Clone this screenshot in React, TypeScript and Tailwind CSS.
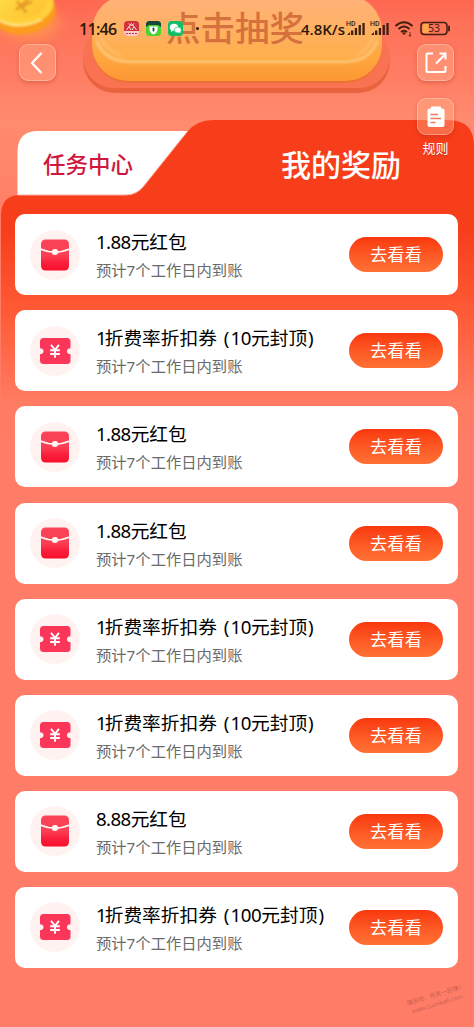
import type { ReactNode } from 'react';

type RewardKind = 'packet' | 'coupon';

interface Reward {
  kind: RewardKind;
  amount: string;
}

const rewards: Reward[] = [
  { kind: 'packet', amount: '1.88' },
  { kind: 'coupon', amount: '10' },
  { kind: 'packet', amount: '1.88' },
  { kind: 'packet', amount: '1.88' },
  { kind: 'coupon', amount: '10' },
  { kind: 'coupon', amount: '10' },
  { kind: 'packet', amount: '8.88' },
  { kind: 'coupon', amount: '100' },
];

function HeroArt() {
  return (
    <svg className="absolute inset-0" width="474" height="120" viewBox="0 0 474 120" aria-hidden="true">
      <defs>
        <linearGradient id="sky" x1="0" y1="0" x2="0" y2="1">
          <stop offset="0" stopColor="#ff6750" />
          <stop offset="0.2" stopColor="#fd7259" />
          <stop offset="0.65" stopColor="#ff7e64" />
          <stop offset="1" stopColor="#ff8b6e" />
        </linearGradient>
        <linearGradient id="face" x1="0" y1="0" x2="0" y2="1">
          <stop offset="0" stopColor="#ffb27c" />
          <stop offset="0.5" stopColor="#ffb163" />
          <stop offset="1" stopColor="#ffae47" />
        </linearGradient>
        <linearGradient id="side" x1="0" y1="0" x2="0" y2="1">
          <stop offset="0" stopColor="#ffb27c" />
          <stop offset="0.7" stopColor="#ffa840" />
          <stop offset="1" stopColor="#fc9833" />
        </linearGradient>
        <linearGradient id="coin" x1="0" y1="0" x2="1" y2="1">
          <stop offset="0" stopColor="#ffe04e" />
          <stop offset="1" stopColor="#ffc02c" />
        </linearGradient>
        <filter id="soft" x="-20%" y="-20%" width="140%" height="140%">
          <feGaussianBlur stdDeviation="0.9" />
        </filter>
        <filter id="glow" x="-50%" y="-50%" width="200%" height="200%">
          <feGaussianBlur stdDeviation="6" />
        </filter>
      </defs>
      <rect width="474" height="120" fill="url(#sky)" />

      {/* Button base */}
      <rect x="83" y="28" width="307" height="65" rx="32" fill="#e9633f" />
      <rect x="83" y="26" width="307" height="62" rx="31" fill="#f97353" />
      <rect x="92" y="-5" width="290" height="88" rx="36" fill="#ee6f38" />
      <rect x="92" y="-5" width="290" height="86" rx="36" fill="url(#side)" />
      <path d="M94 30Q98 -4 132 -4H342Q376 -4 380 30Q378 62 344 62H130Q96 62 94 30Z" fill="url(#face)" />
      <g fill="none" stroke="#ffcc83" strokeLinecap="round" filter="url(#soft)">
        <path d="M97 42Q105 61 128 62H346Q370 61 377 42" strokeWidth="2" />
        <path d="M99 32Q103 48 121 56M375 32Q371 48 355 56" strokeWidth="1.6" opacity="0.6" />
      </g>

      {/* Gold coin */}
      <ellipse cx="28" cy="22" rx="32" ry="18" fill="#ffa24a" opacity="0.6" filter="url(#glow)" />
      <g transform="rotate(-8 24 6)" filter="url(#soft)">
        <ellipse cx="23" cy="12" rx="32" ry="22" fill="#fb9c1c" />
        <ellipse cx="22" cy="5" rx="32" ry="21" fill="#ffd03a" />
        <ellipse cx="21" cy="1" rx="27" ry="18" fill="url(#coin)" />
        <path d="M18 1L25 12M30 -1L20 6M16 8L32 3" stroke="#e59a25" strokeWidth="2.6" strokeLinecap="round" />
        <path d="M-2 17Q14 29 40 22" fill="none" stroke="#ffe98a" strokeWidth="1.6" />
      </g>
    </svg>
  );
}

function Signal() {
  return (
    <svg width="20" height="17" viewBox="0 0 20 17" aria-hidden="true">
      <text x="0" y="6.5" fontSize="7" fontWeight="500" fill="#42200f" fontFamily="Roboto, sans-serif">
        HD
      </text>
      <path d="M1 16L4 13V16ZM5 11.5H7.3V16H5ZM8.8 9H11.1V16H8.8ZM12.6 6H14.9V16H12.6ZM16.4 4H18.7V16H16.4Z" fill="#42200f" />
    </svg>
  );
}

function StatusBar() {
  return (
    <div className="absolute inset-x-0 top-0 h-11 text-[#2b170b]">
      <span className="absolute left-[79px] top-[18px] font-['Open_Sans',sans-serif] text-[16px] font-semibold leading-[22px] tracking-[-0.7px]">
        11:46
      </span>
      <div className="absolute left-[124px] top-[21px] flex items-center gap-[7px]">
        <svg width="15" height="15" viewBox="0 0 15 15">
          <rect width="15" height="15" rx="3.5" fill="#d2333b" />
          <path
            d="M2.5 9L5 5.5L7 9M8 9L10 5.5L12.5 9M5 5.5L7.5 2.5L10 5.5M5 2.5L7.5 5L10 2.5"
            fill="none"
            stroke="#fbe3e0"
            strokeWidth="1"
          />
          <path d="M0 10H15V11.5Q15 15 11.5 15H3.5Q0 15 0 11.5Z" fill="#f7cdc9" />
          <path d="M2 12.5H13" stroke="#d2333b" strokeDasharray="2 1" />
        </svg>
        <svg width="15" height="15" viewBox="0 0 15 15">
          <rect width="15" height="15" rx="3.5" fill="#4bd335" />
          <path d="M0 6V3.5Q0 0 3.5 0H11.5Q15 0 15 3.5V6L12 4H3Z" fill="#15473b" />
          <path d="M3.5 5.5H11.5V8.5Q11 12 7.5 13.5Q4 12 3.5 8.5Z" fill="#fff" />
          <path d="M7.5 7.5V9.5" stroke="#15473b" strokeWidth="1.8" strokeLinecap="round" />
        </svg>
        <svg width="15" height="15" viewBox="0 0 15 15">
          <rect width="15" height="15" rx="3.5" fill="#13bd67" />
          <ellipse cx="6" cy="6.2" rx="4.2" ry="3.5" fill="#fff" />
          <ellipse cx="9.8" cy="9" rx="3.5" ry="2.9" fill="#fff" stroke="#13bd67" strokeWidth="0.6" />
          <path d="M3 8.5L3 11L5.5 9.5M11 11L12.3 12.4V10" fill="#fff" />
        </svg>
      </div>
      <span className="absolute left-[196px] top-[27px] size-[3px] rounded-full bg-[#2b170b]" />
      <span className="absolute left-[301px] top-[18px] whitespace-nowrap font-['Open_Sans',sans-serif] text-[15px] font-semibold leading-[22px]">
        4.8K/s
      </span>
      <div className="absolute left-[346px] top-[19px] flex gap-1">
        <Signal />
        <Signal />
      </div>
      <svg className="absolute left-[394px] top-[20px]" width="21" height="17" viewBox="0 0 21 17">
        <g fill="none" stroke="#42200f" strokeWidth="2">
          <path d="M1.5 6Q10 -1.5 18.5 6" />
          <path d="M4.5 9Q10 4 15.5 9" />
          <path d="M7 12Q10 9.5 13 12" />
        </g>
        <path d="M8 13Q10 11.5 12 13L10 15Z" fill="#42200f" />
        <path d="M16 12V16M15 15L16 16.5L17 15" stroke="#42200f" strokeWidth="0.8" fill="none" />
      </svg>
      <svg className="absolute left-[420px] top-[21px]" width="31" height="15" viewBox="0 0 31 15">
        <rect x="1" y="1.5" width="26" height="12" rx="3.2" fill="none" stroke="#42200f" strokeWidth="1.5" />
        <rect x="2.5" y="3" width="7" height="9" rx="1.5" fill="#ffa64e" />
        <path d="M29 5.5V9.5" stroke="#42200f" strokeWidth="1.8" strokeLinecap="round" />
        <text x="14" y="11.2" textAnchor="middle" fontSize="10.5" fill="#42200f" fontFamily="Noto Sans, sans-serif">
          53
        </text>
      </svg>
    </div>
  );
}

function GlassButton({ label, children }: { label: string; children: ReactNode }) {
  return (
    <button
      type="button"
      aria-label={label}
      className="flex size-[37px] items-center justify-center rounded-[9px] border border-white/30 bg-[#ffb18c]/40 shadow-[0_2px_4px_rgba(170,45,20,0.35)]"
    >
      {children}
    </button>
  );
}

function TabBackdrop() {
  return (
    <svg className="absolute left-0 top-0" width="474" height="907" viewBox="0 0 474 907" aria-hidden="true">
      <defs>
        <linearGradient id="panel" gradientUnits="userSpaceOnUse" x1="0" y1="0" x2="0" y2="907">
          <stop offset="0" stopColor="#f73d1a" />
          <stop offset="0.12" stopColor="#f73e1b" />
          <stop offset="0.215" stopColor="#ff5b37" />
          <stop offset="0.31" stopColor="#ff7b61" />
          <stop offset="0.36" stopColor="#ff7d66" />
          <stop offset="1" stopColor="#ff7d66" />
        </linearGradient>
        <linearGradient id="behind" x1="0" y1="0" x2="0" y2="1">
          <stop offset="0" stopColor="#ff8b6e" />
          <stop offset="1" stopColor="#ff7d66" />
        </linearGradient>
      </defs>
      <rect width="474" height="110" fill="url(#behind)" />
      <path d="M17.5 78V31Q18 11 38 11H200V78Z" fill="#fff" />
      <path
        d="M1 907V94Q2 75 20 75H126Q136 75 143 67L187 12Q197 0 213 0H448Q474 0 474 26V907Z"
        fill="url(#panel)"
      />
      <path d="M18 75H126Q136 75 143 67L187 12" fill="none" stroke="#ffab97" strokeWidth="1" />
    </svg>
  );
}

function RewardIcon({ kind }: { kind: RewardKind }) {
  if (kind === 'packet') {
    return (
      <svg width="50" height="50" viewBox="0 0 50 50" aria-hidden="true">
        <defs>
          <linearGradient id="packet" x1="0" y1="0" x2="0" y2="1">
            <stop offset="0" stopColor="#fb4459" />
            <stop offset="0.5" stopColor="#fb4055" />
            <stop offset="0.7" stopColor="#fb2440" />
            <stop offset="1" stopColor="#f60d2c" />
          </linearGradient>
        </defs>
        <circle cx="25" cy="25" r="25" fill="#fff2f0" />
        <rect x="11" y="9.5" width="28" height="31" rx="4.5" fill="url(#packet)" />
        <path d="M10.5 19.2Q18 22.3 25 22.3T39.5 19.2" fill="none" stroke="#fff2f0" strokeWidth="1.9" />
        <ellipse cx="25" cy="22" rx="3.2" ry="3" fill="#fff5f3" />
      </svg>
    );
  }

  return (
    <svg width="50" height="50" viewBox="0 0 50 50" aria-hidden="true">
      <circle cx="25" cy="25" r="25" fill="#fff2f0" />
      <path
        d="M13.5 12H37Q40.5 12 40.5 15.5V22.3Q37 22.5 37 25.3T40.5 28.3V34.5Q40.5 38 37 38H13.5Q10 38 10 34.5V28.3Q13.5 28 13.5 25.3T10 22.3V15.5Q10 12 13.5 12Z"
        fill="#fa3659"
      />
      <path
        d="M21 18.8L25 23.8L29 18.8M25 23.8V31.8M20.2 24.3H29.8M20.2 28H29.8"
        fill="none"
        stroke="#fff"
        strokeWidth="1.9"
      />
    </svg>
  );
}

function RewardTitle({ kind, amount }: Reward) {
  if (kind === 'packet') {
    return (
      <>
        <span className="tracking-[-0.6px]">{amount}</span>元红包
      </>
    );
  }

  return (
    <>
      <span className="-mr-[2px]">1</span>折费率折扣券
      <span className="ml-[7px] mr-[1px]">(</span>
      <span className="tracking-[-0.4px]">{amount}</span>元封顶
      <span className="ml-px">)</span>
    </>
  );
}

function RewardCard({ reward }: { reward: Reward }) {
  return (
    <li className="flex h-[81px] items-center rounded-[10px] bg-white px-[15px]">
      <RewardIcon kind={reward.kind} />
      <div className="ml-4 flex-1 whitespace-nowrap">
        <h2 className="mt-px flex h-[26px] items-center text-[18.7px] leading-[26px] text-black">
          <RewardTitle {...reward} />
        </h2>
        <p className="mt-1 text-[15.3px] leading-[22px] text-[#6a6a6a]">预计7个工作日内到账</p>
      </div>
      <button
        type="button"
        className="h-[35px] w-[94px] rounded-full bg-linear-to-b from-[#f9370c] to-[#ff7135] text-[17.3px] leading-[36px] text-white"
      >
        去看看
      </button>
    </li>
  );
}

export default function App() {
  return (
    <main className="relative h-[1027px] w-[474px] overflow-hidden bg-[#ff7d66] font-['Noto_Sans','Noto_Sans_CJK_SC',sans-serif]">
      <header className="relative h-[120px]">
        <HeroArt />
        <div className="absolute left-[166px] top-[5px] whitespace-nowrap text-[34.5px] font-medium leading-[46px] text-[#d5713c]">
          点击抽奖
        </div>
        <StatusBar />
        <div className="relative flex justify-between pl-[19px] pr-[20px] pt-[44px]">
          <GlassButton label="返回">
            <svg className="mr-[3px]" width="13" height="22" viewBox="0 0 13 22" fill="none" stroke="#fff" strokeWidth="2.3">
              <path d="M11 1.5L2 11L11 20.5" strokeLinecap="round" strokeLinejoin="round" />
            </svg>
          </GlassButton>
          <GlassButton label="分享">
            <svg width="24" height="24" viewBox="0 0 24 24" fill="none" stroke="#fff" strokeWidth="2.1">
              <path d="M9 2.5H4Q2.5 2.5 2.5 4V19.5Q2.5 21 4 21H20Q21.5 21 21.5 19.5V15M12 12.5L21 3.5M15.5 2.5H21.5V8.5" />
            </svg>
          </GlassButton>
        </div>
      </header>

      <section className="relative">
        <TabBackdrop />
        <div className="relative flex h-[94.3px] whitespace-nowrap">
          <button
            type="button"
            className="ml-[43px] mt-[29px] h-8 text-left text-[22.5px] font-medium leading-8 text-[#d0173d]"
          >
            任务中心
          </button>
          <button
            type="button"
            className="ml-[148px] mt-[23px] h-11 text-left text-[30px] font-medium leading-[44px] text-white"
          >
            我的奖励
          </button>
        </div>
        <ul className="relative ml-[15px] flex w-[443px] flex-col gap-[15.1px]">
          {rewards.map((reward, index) => (
            <RewardCard key={index} reward={reward} />
          ))}
        </ul>
      </section>

      {/* Floating rules entry */}
      <div className="absolute left-[417px] top-[98px] flex w-[37px] flex-col items-center">
        <GlassButton label="规则">
          <svg width="20" height="24" viewBox="0 0 20 24">
            <path d="M5 1.5H15V4H5Z" fill="#fff" />
            <rect x="1.5" y="3.5" width="17" height="18.5" rx="2" fill="#fff" />
            <path d="M4.5 9.5H12M4.5 13.5H15M4.5 17.5H9.5" stroke="#f07a5c" strokeWidth="1.4" />
          </svg>
        </GlassButton>
        <span className="mt-[3px] whitespace-nowrap text-[13px] leading-5 text-white [text-shadow:0_1px_1px_rgba(120,20,0,0.35)]">
          规则
        </span>
      </div>

      {/* Watermark */}
      <div className="absolute left-[407px] top-[991px] w-[58px] origin-center -rotate-[17deg] whitespace-nowrap text-center text-[6px] leading-[9px] text-[#b85043]/70">
        赚客吧，有奖一起赚！
        <br />
        www.zuanke8.com
      </div>
    </main>
  );
}
